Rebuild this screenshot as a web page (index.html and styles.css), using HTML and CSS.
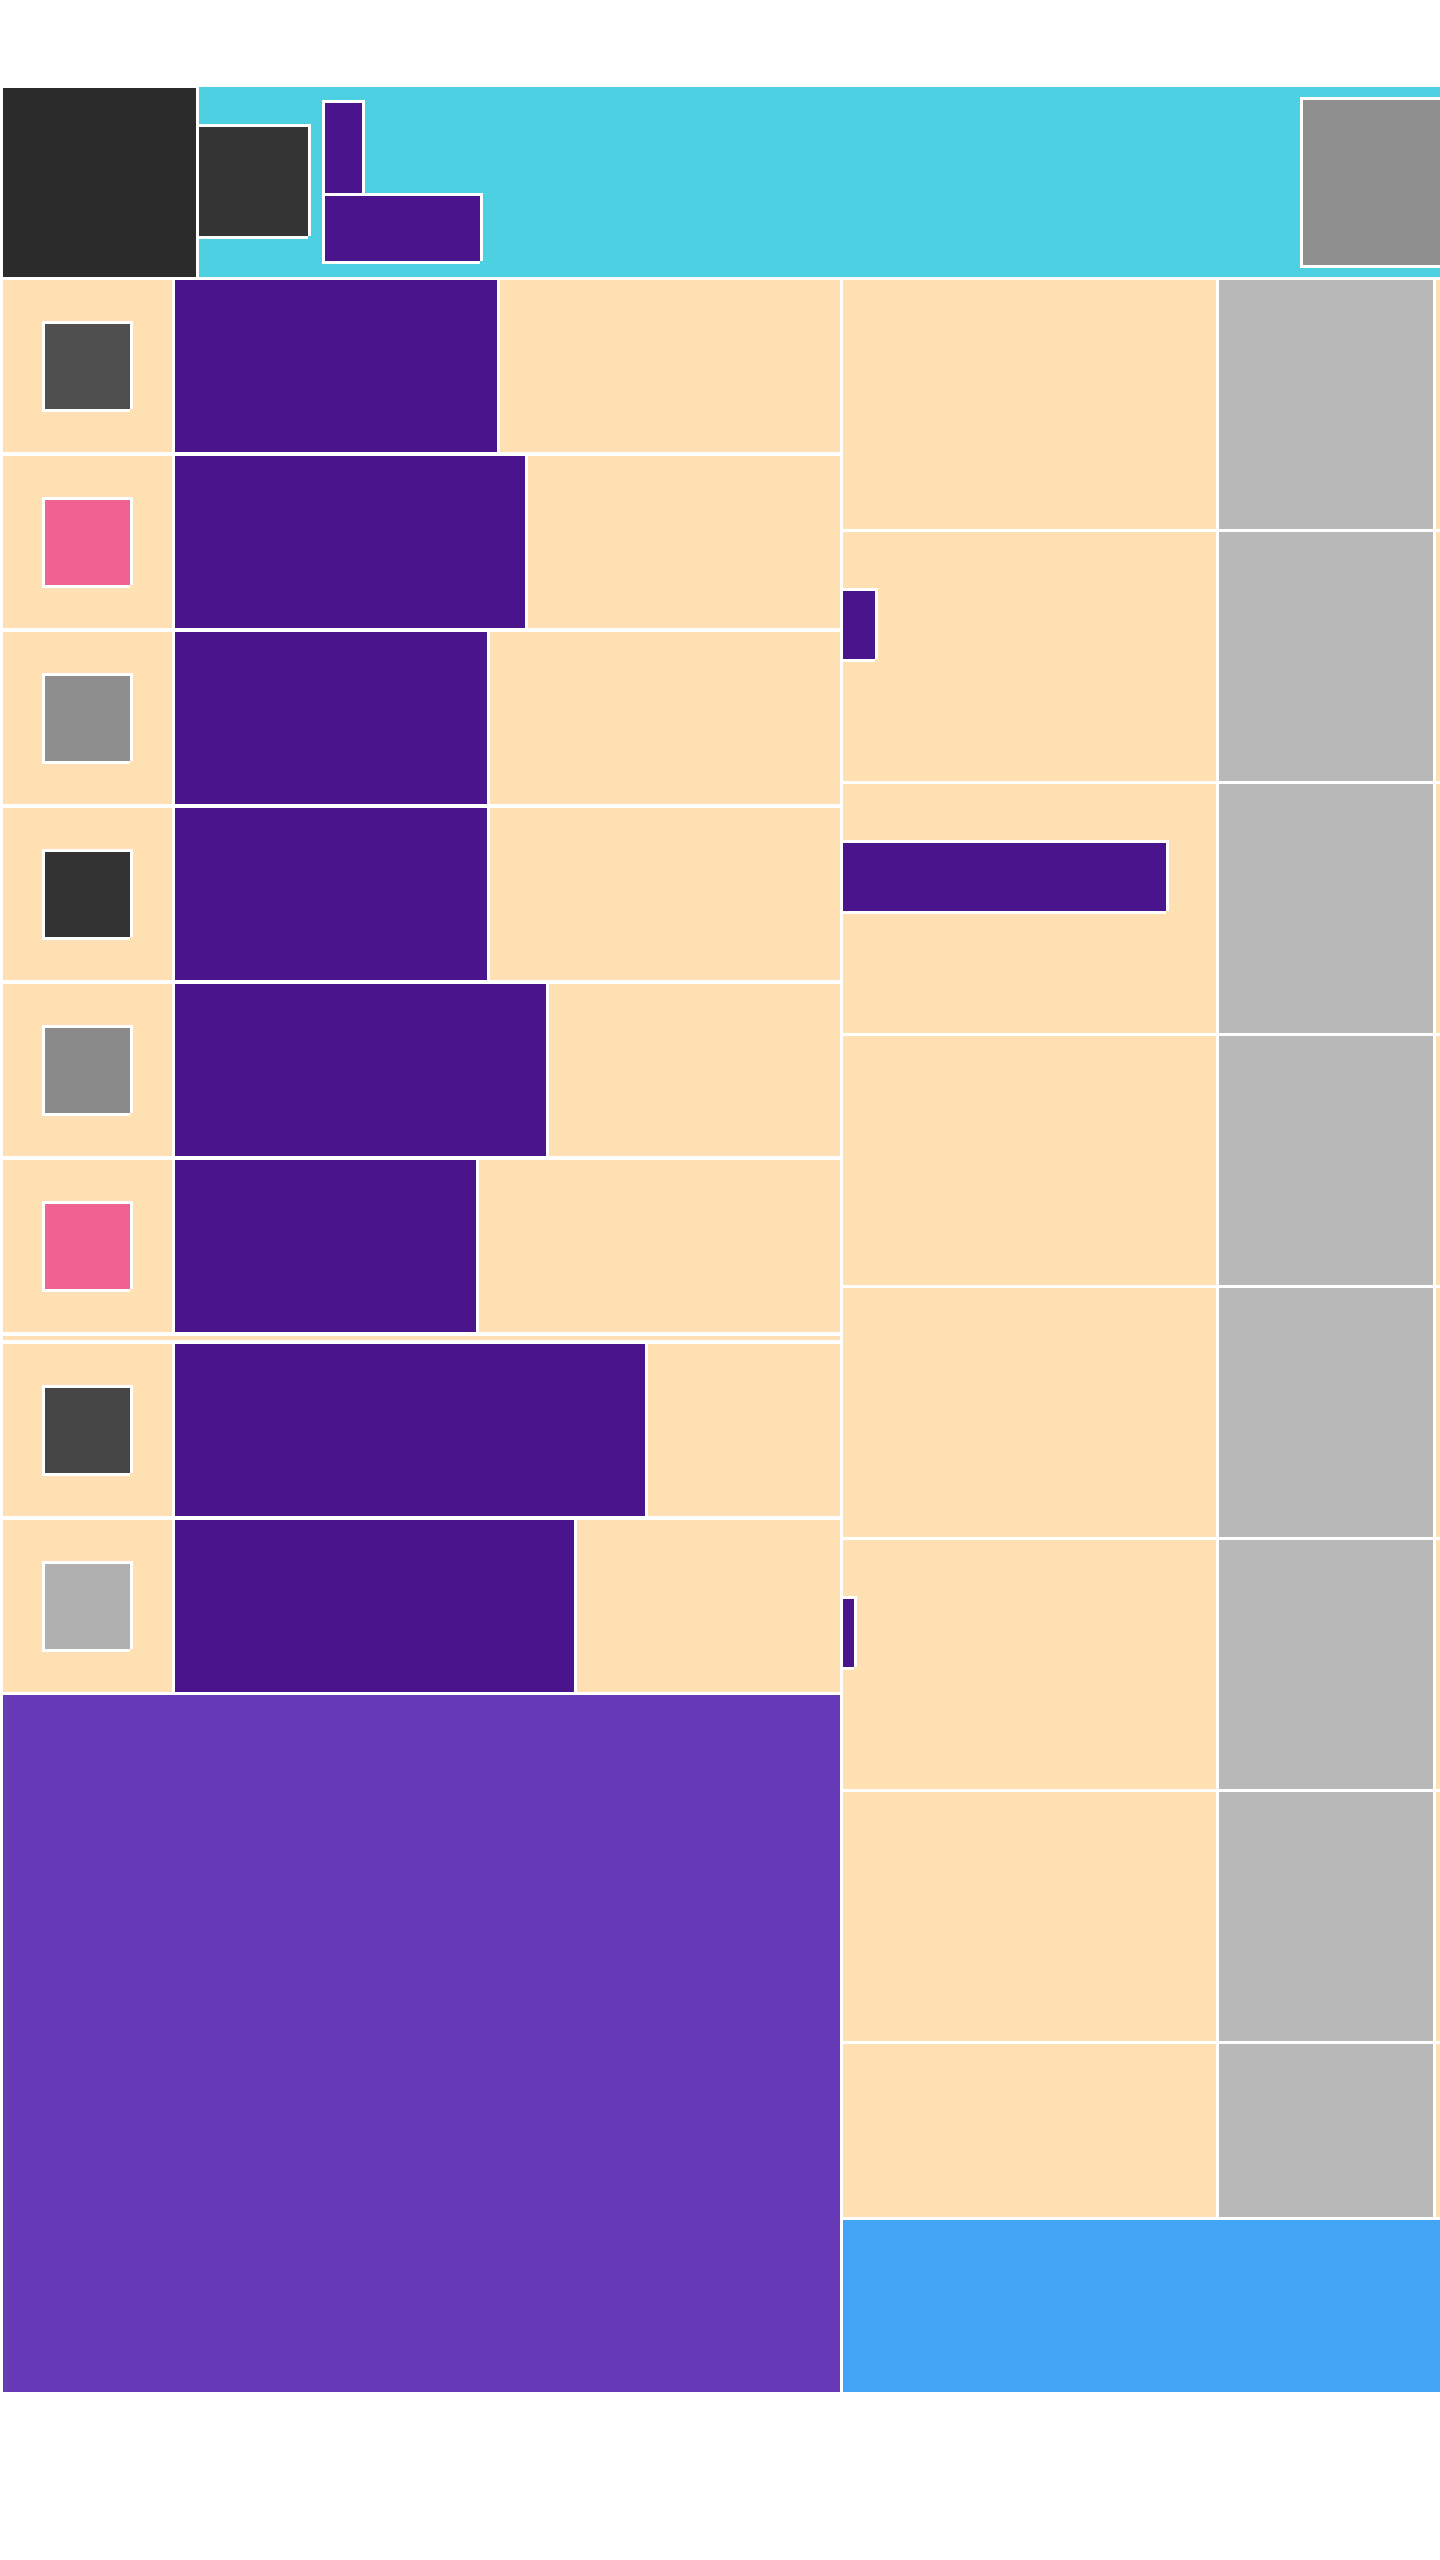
FILE: index.html
```html
<!DOCTYPE html>
<html>
<head>
    <title>Feed</title>
    <link rel="stylesheet" href="styles.css">
</head>
<body>
    <div class="page">
        <!-- Top bar: logo block and toolbar -->
        <header class="header">
            <div class="logo"></div>
            <div class="toolbar">
                <div class="avatar framed"></div>
                <div class="tabs">
                    <div class="tab-short framed"></div>
                    <div class="tab-wide framed"></div>
                </div>
                <div class="preview framed"></div>
            </div>
        </header>

        <main class="content">
            <!-- Left column: list of items and promo block -->
            <section class="feed">
                <div class="list">
                    <div class="row">
                        <div class="thumb-cell"><div class="thumb framed thumb-1"></div></div>
                        <div class="bar" style="width: 322px"></div>
                        <div class="fill"></div>
                    </div>
                    <div class="row">
                        <div class="thumb-cell"><div class="thumb framed thumb-2"></div></div>
                        <div class="bar" style="width: 350px"></div>
                        <div class="fill"></div>
                    </div>
                    <div class="row">
                        <div class="thumb-cell"><div class="thumb framed thumb-3"></div></div>
                        <div class="bar" style="width: 312px"></div>
                        <div class="fill"></div>
                    </div>
                    <div class="row">
                        <div class="thumb-cell"><div class="thumb framed thumb-4"></div></div>
                        <div class="bar" style="width: 312px"></div>
                        <div class="fill"></div>
                    </div>
                    <div class="row">
                        <div class="thumb-cell"><div class="thumb framed thumb-5"></div></div>
                        <div class="bar" style="width: 371px"></div>
                        <div class="fill"></div>
                    </div>
                    <div class="row">
                        <div class="thumb-cell"><div class="thumb framed thumb-2"></div></div>
                        <div class="bar" style="width: 301px"></div>
                        <div class="fill"></div>
                    </div>
                    <div class="divider"></div>
                    <div class="row">
                        <div class="thumb-cell"><div class="thumb framed thumb-7"></div></div>
                        <div class="bar" style="width: 470px"></div>
                        <div class="fill"></div>
                    </div>
                    <div class="row">
                        <div class="thumb-cell"><div class="thumb framed thumb-8"></div></div>
                        <div class="bar" style="width: 399px"></div>
                        <div class="fill"></div>
                    </div>
                </div>
                <div class="promo"></div>
            </section>

            <!-- Right column: side rows and footer -->
            <aside class="side">
                <div class="side-row">
                    <div class="side-main"></div>
                    <div class="side-meta"></div>
                    <div class="side-extra"></div>
                </div>
                <div class="side-row">
                    <div class="side-main"><div class="meter framed" style="width: 32px"></div></div>
                    <div class="side-meta"></div>
                    <div class="side-extra"></div>
                </div>
                <div class="side-row">
                    <div class="side-main"><div class="meter framed" style="width: 323px"></div></div>
                    <div class="side-meta"></div>
                    <div class="side-extra"></div>
                </div>
                <div class="side-row">
                    <div class="side-main"></div>
                    <div class="side-meta"></div>
                    <div class="side-extra"></div>
                </div>
                <div class="side-row">
                    <div class="side-main"></div>
                    <div class="side-meta"></div>
                    <div class="side-extra"></div>
                </div>
                <div class="side-row">
                    <div class="side-main"><div class="meter framed" style="width: 11px"></div></div>
                    <div class="side-meta"></div>
                    <div class="side-extra"></div>
                </div>
                <div class="side-row">
                    <div class="side-main"></div>
                    <div class="side-meta"></div>
                    <div class="side-extra"></div>
                </div>
                <div class="side-row short">
                    <div class="side-main"></div>
                    <div class="side-meta"></div>
                    <div class="side-extra"></div>
                </div>
                <div class="side-footer"></div>
            </aside>
        </main>
    </div>
</body>
</html>
```

FILE: styles.css
```css
html, body {
    margin: 0;
    overflow-x: hidden;
    background-color: #fff;
    font-family: "Liberation Sans", Arial, sans-serif;
}

.page {
    width: 1517px;
    padding: 87px 0 0 3px;
    display: flex;
    flex-direction: column;
    gap: 3px;
}

/* white edge around small blocks */
.framed {
    flex-shrink: 0;
    box-shadow: -3px -3px 0 #fff, 3px -3px 0 #fff, 3px 0 0 #fff, -3px 3px 0 #fff, 0 3px 0 #fff;
}

/* header */
.header {
    display: flex;
    gap: 3px;
    height: 190px;
}

.logo {
    flex-shrink: 0;
    width: 193px;
    height: 189px;
    align-self: flex-end;
    background-color: #2b2b2b;
}

.toolbar {
    flex: 1;
    min-width: 0;
    display: flex;
    align-items: flex-start;
    background-color: #4dd0e1;
}

.avatar {
    width: 109px;
    height: 109px;
    margin-top: 40px;
    background-color: #353535;
}

.tabs {
    flex-shrink: 0;
    display: flex;
    flex-direction: column;
    align-items: flex-start;
    gap: 3px;
    margin: 16px 0 0 17px;
}

.tab-short {
    width: 37px;
    height: 90px;
    background-color: #4a148c;
}

.tab-wide {
    width: 155px;
    height: 65px;
    background-color: #4a148c;
}

.preview {
    width: 180px;
    height: 165px;
    margin: 13px 0 0 823px;
    background-color: #8f8f8f;
}

/* main area */
.content {
    display: flex;
    gap: 3px;
}

.feed {
    flex-shrink: 0;
    width: 837px;
    display: flex;
    flex-direction: column;
}

.list {
    display: flex;
    flex-direction: column;
    gap: 4px;
}

.row {
    display: flex;
    gap: 3px;
    height: 172px;
}

.thumb-cell {
    flex-shrink: 0;
    width: 169px;
    display: flex;
    align-items: center;
    justify-content: center;
    background-color: #ffe0b2;
}

.thumb {
    width: 85px;
    height: 85px;
}

.thumb-1 { background-color: #4f4f4f; }
.thumb-2 { background-color: #f06292; }
.thumb-3 { background-color: #8e8e8e; }
.thumb-4 { background-color: #333333; }
.thumb-5 { background-color: #8a8a8a; }
.thumb-7 { background-color: #464646; }
.thumb-8 { background-color: #b0b0b0; }

.bar {
    flex-shrink: 0;
    background-color: #4a148c;
}

.fill {
    flex: 1;
    background-color: #ffe0b2;
}

.divider {
    height: 4px;
    background-color: #ffe0b2;
}

.promo {
    height: 697px;
    margin-top: 3px;
    background-color: #673ab7;
}

/* right column */
.side {
    flex: 1;
    display: flex;
    flex-direction: column;
    gap: 3px;
}

.side-row {
    display: flex;
    gap: 3px;
    height: 249px;
}

.side-row.short {
    height: 173px;
}

.side-main {
    flex-shrink: 0;
    width: 373px;
    background-color: #ffe0b2;
}

.side-meta {
    flex-shrink: 0;
    width: 214px;
    background-color: #b8b8b8;
}

.side-extra {
    flex: 1;
    background-color: #ffe0b2;
}

.meter {
    height: 68px;
    margin-top: 59px;
    background-color: #4a148c;
}

.side-footer {
    height: 172px;
    background-color: #42a5f5;
}
```
